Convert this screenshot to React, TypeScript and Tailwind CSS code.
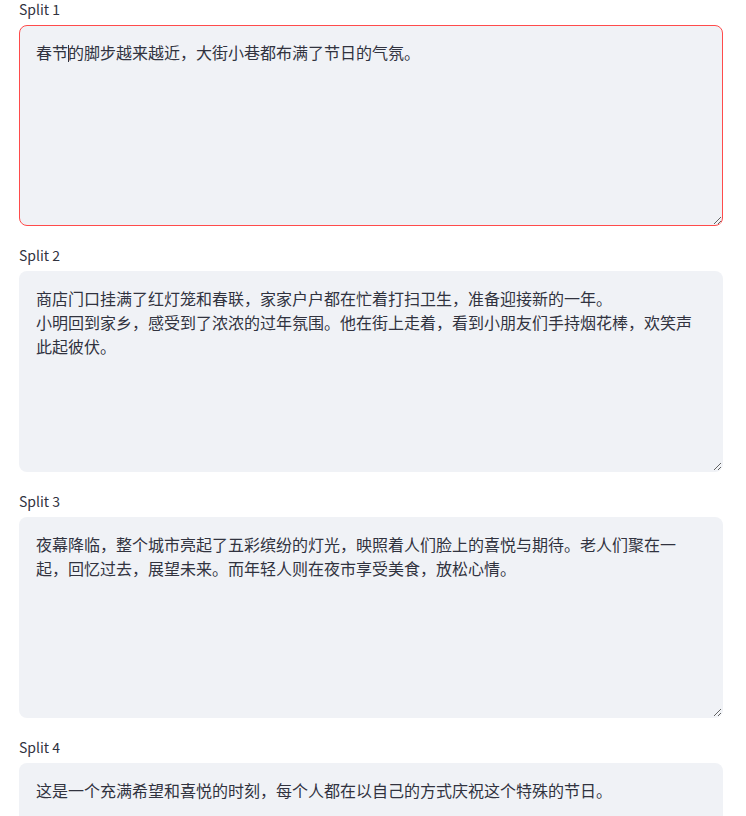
import React from 'react';

const splits = [
  '春节的脚步越来越近，大街小巷都布满了节日的气氛。',
  '商店门口挂满了红灯笼和春联，家家户户都在忙着打扫卫生，准备迎接新的一年。\n小明回到家乡，感受到了浓浓的过年氛围。他在街上走着，看到小朋友们手持烟花棒，欢笑声此起彼伏。',
  '夜幕降临，整个城市亮起了五彩缤纷的灯光，映照着人们脸上的喜悦与期待。老人们聚在一起，回忆过去，展望未来。而年轻人则在夜市享受美食，放松心情。',
  '这是一个充满希望和喜悦的时刻，每个人都在以自己的方式庆祝这个特殊的节日。',
];

function SplitArea({ index, text }: { index: number; text: string }) {
  const focused = index === 0;
  return (
    <div className="flex flex-col">
      <label className="h-[25px] text-[14px] leading-[18px] text-[#31333f]">Split {index + 1}</label>
      <div className="relative">
        <textarea
          readOnly
          defaultValue={text}
          className={
            'block w-full h-[201px] resize-y rounded-lg bg-[#f0f2f6] px-4 py-[14px] text-[16px] leading-[24px] text-[#31333f] outline-none border ' +
            (focused ? 'border-[#ff4b4b]' : 'border-transparent')
          }
        />
        {/* caret */}
        {focused && <span className="absolute left-[49px] top-[20px] h-[17px] w-px bg-[#31333f]" />}
      </div>
    </div>
  );
}

export default function App() {
  return (
    <div
      className="min-h-screen bg-white pl-[19px] pr-[23px] overflow-hidden h-[816px]"
      style={{ fontFamily: '"Noto Sans CJK SC", "Noto Sans", sans-serif' }}
    >
      <div className="flex flex-col gap-5">
        {splits.map((t, i) => (
          <SplitArea key={i} index={i} text={t} />
        ))}
      </div>
    </div>
  );
}
